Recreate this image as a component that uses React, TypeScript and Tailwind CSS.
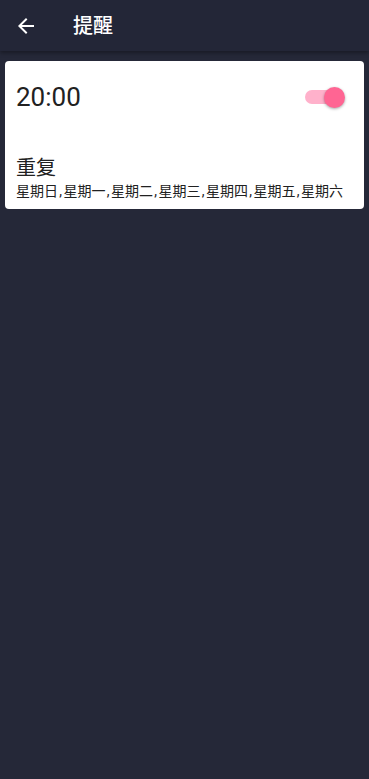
import React from "react";

const days = ["星期日", "星期一", "星期二", "星期三", "星期四", "星期五", "星期六"];

export default function App() {
  return (
    <div
      className="w-[369px] h-[779px] bg-[#252838] flex flex-col"
      style={{ fontFamily: 'Roboto, "Noto Sans CJK SC", sans-serif' }}
    >
      <div className="h-[51px] bg-[#232637] flex items-center shadow-[0_2px_4px_rgba(0,0,0,0.35)] relative z-10">
        <svg width="24" height="24" viewBox="0 0 24 24" className="ml-[14px]" fill="none">
          <path d="M20 11H7.83l5.59-5.59L12 4l-8 8 8 8 1.41-1.41L7.83 13H20v-2z" fill="#fff" />
        </svg>
        <span className="ml-[35px] text-white text-[20px] font-medium leading-none">提醒</span>
      </div>
      <div className="mx-[5px] mt-[10px] bg-white rounded-[4px] h-[148px] flex flex-col pl-[11px] pr-[19px]">
        <div className="flex items-center justify-between mt-[20px] h-[32px]">
          <span className="text-[26px] text-[#212121] leading-none">20:00</span>
          <div className="relative w-[40px] h-[21px] flex items-center">
            <div className="w-[32px] h-[14px] rounded-full bg-[#ffb1cb]" />
            <div className="absolute right-0 top-0 w-[21px] h-[21px] rounded-full bg-[#ff6593] shadow-[0_1px_3px_rgba(0,0,0,0.35)]" />
          </div>
        </div>
        <div className="mt-[42px] text-[20px] text-[#212121] leading-[26px]">重复</div>
        <div className="text-[14px] text-[#212121] leading-[20px] whitespace-nowrap flex">
          {days.map((d, i) => (
            <span key={d} className="flex">
              <span>{d}</span>
              {i < days.length - 1 && <span className="w-[5.5px] text-center">,</span>}
            </span>
          ))}
        </div>
      </div>
    </div>
  );
}
